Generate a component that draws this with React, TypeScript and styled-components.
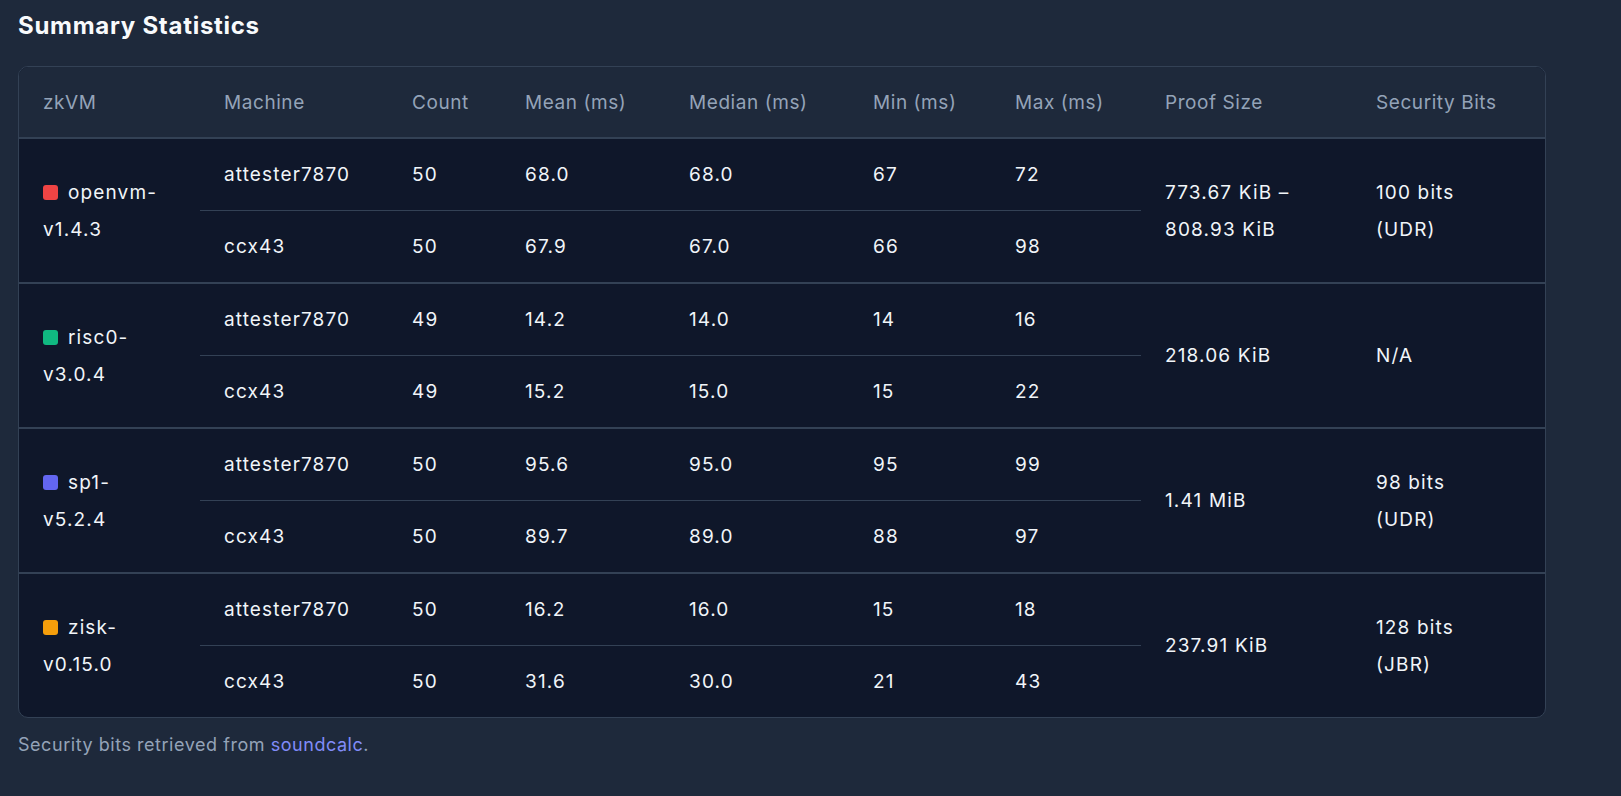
import React from "react";
import styled, { createGlobalStyle } from "styled-components";

const Global = createGlobalStyle`
  body {
    margin: 0;
    background: #1e293b;
    font-family: Inter, "Noto Sans", sans-serif;
    color: #f1f5f9;
  }
`;

const Page = styled.div`
  padding: 8px 75px 20px 18px;
`;

const Title = styled.h2`
  margin: 0 0 22px;
  font-size: 24px;
  font-weight: 700;
  letter-spacing: 0.03em;
  line-height: 36px;
  color: #f8fafc;
`;

const Card = styled.div`
  border: 1px solid #334155;
  border-radius: 10px;
  overflow: hidden;
  background: #0f172a;
`;

const Table = styled.table`
  width: 100%;
  border-collapse: collapse;
  table-layout: fixed;
  font-size: 19px;
  letter-spacing: 0.06em;
`;

const Th = styled.th`
  text-align: left;
  font-weight: 400;
  color: #94a3b8;
  background: #1e293b;
  height: 70px;
  padding: 0 24px;
  border-bottom: 2px solid #334155;
  white-space: nowrap;
  letter-spacing: 0.03em;
`;

const Td = styled.td<{ $split?: boolean; $groupEnd?: boolean }>`
  padding: 0 24px;
  height: 71px;
  line-height: 37px;
  color: #f1f5f9;
  vertical-align: middle;
  border-bottom: ${p =>
    p.$groupEnd ? "2px solid #334155" : p.$split ? "1px solid #334155" : "none"};
`;

const Swatch = styled.span<{ $c: string }>`
  display: inline-block;
  width: 15px;
  height: 15px;
  border-radius: 3px;
  background: ${p => p.$c};
  margin-right: 10px;
  vertical-align: -1px;
`;

const Note = styled.p`
  margin: 16px 0 0;
  color: #94a3b8;
  font-size: 18px;
  letter-spacing: 0.03em;
  a {
    color: #818cf8;
    text-decoration: none;
  }
`;

const widths = [181, 188, 113, 164, 184, 142, 150, 211, 193];
const heads = ["zkVM", "Machine", "Count", "Mean (ms)", "Median (ms)", "Min (ms)", "Max (ms)", "Proof Size", "Security Bits"];

const groups = [
  { name: "openvm-", ver: "v1.4.3", color: "#ef4444", proof: ["773.67 KiB –", "808.93 KiB"], sec: ["100 bits", "(UDR)"],
    rows: [["attester7870", "50", "68.0", "68.0", "67", "72"], ["ccx43", "50", "67.9", "67.0", "66", "98"]] },
  { name: "risc0-", ver: "v3.0.4", color: "#10b981", proof: ["218.06 KiB"], sec: ["N/A"],
    rows: [["attester7870", "49", "14.2", "14.0", "14", "16"], ["ccx43", "49", "15.2", "15.0", "15", "22"]] },
  { name: "sp1-", ver: "v5.2.4", color: "#6366f1", proof: ["1.41 MiB"], sec: ["98 bits", "(UDR)"],
    rows: [["attester7870", "50", "95.6", "95.0", "95", "99"], ["ccx43", "50", "89.7", "89.0", "88", "97"]] },
  { name: "zisk-", ver: "v0.15.0", color: "#f59e0b", proof: ["237.91 KiB"], sec: ["128 bits", "(JBR)"],
    rows: [["attester7870", "50", "16.2", "16.0", "15", "18"], ["ccx43", "50", "31.6", "30.0", "21", "43"]] },
];

const Lines = ({ parts }: { parts: string[] }) => (
  <>
    {parts.map((p, i) => (
      <div key={i}>{p}</div>
    ))}
  </>
);

export default function App() {
  return (
    <Page>
      <Global />
      <Title>Summary Statistics</Title>
      <Card>
        <Table>
          <colgroup>
            {widths.map((w, i) => (
              <col key={i} style={{ width: w }} />
            ))}
          </colgroup>
          <thead>
            <tr>
              {heads.map(h => (
                <Th key={h}>{h}</Th>
              ))}
            </tr>
          </thead>
          <tbody>
            {groups.map((g, gi) => {
              const last = gi === groups.length - 1;
              return g.rows.map((r, ri) => (
                <tr key={gi + "-" + ri}>
                  {ri === 0 && (
                    <Td rowSpan={2} $groupEnd={!last}>
                      <div><Swatch $c={g.color} />{g.name}</div>
                      <div>{g.ver}</div>
                    </Td>
                  )}
                  {r.map((c, ci) => (
                    <Td key={ci} $split={ri === 0} $groupEnd={ri === 1 && !last}>
                      {c}
                    </Td>
                  ))}
                  {ri === 0 && (
                    <>
                      <Td rowSpan={2} $groupEnd={!last}><Lines parts={g.proof} /></Td>
                      <Td rowSpan={2} $groupEnd={!last}><Lines parts={g.sec} /></Td>
                    </>
                  )}
                </tr>
              ));
            })}
          </tbody>
        </Table>
      </Card>
      <Note>
        Security bits retrieved from <a href="#">soundcalc</a>.
      </Note>
    </Page>
  );
}
